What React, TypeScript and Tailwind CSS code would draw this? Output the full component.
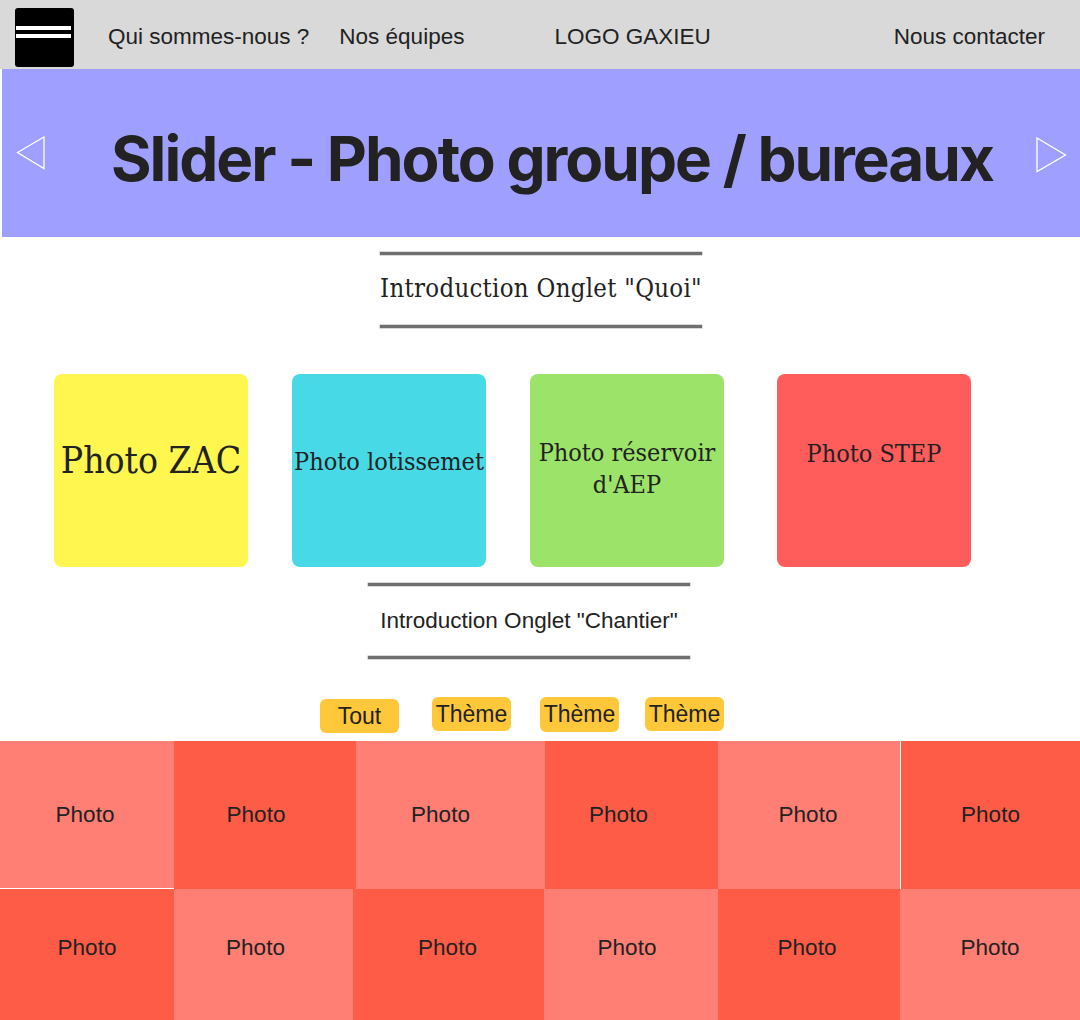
import React from 'react';

const navFont = "font-['Liberation_Sans',Arial,sans-serif]";
const slabFont = "font-['DejaVu_Serif_Condensed','DejaVu_Serif',serif]";

type Cell = { bg: string; w: string; shift: string };

const rowOne: Cell[] = [
  { bg: 'bg-[#ff7f75] border-b border-white', w: 'w-[174px]', shift: 'pr-[4px]' },
  { bg: 'bg-[#ff5c47]', w: 'w-[182px]', shift: 'pr-[18px]' },
  { bg: 'bg-[#ff7f75]', w: 'w-[189px]', shift: 'pr-[20px]' },
  { bg: 'bg-[#ff5c47]', w: 'w-[173px]', shift: 'pr-[26px]' },
  { bg: 'bg-[#ff7f75]', w: 'w-[182px]', shift: 'pr-[2px]' },
  { bg: 'bg-[#ff5c47] border-l border-white', w: 'w-[180px]', shift: 'pr-0' },
];

const rowTwo: Cell[] = [
  { bg: 'bg-[#ff5c47]', w: 'w-[174px]', shift: 'pr-0' },
  { bg: 'bg-[#ff7f75]', w: 'w-[179px]', shift: 'pr-[16px]' },
  { bg: 'bg-[#ff5c47]', w: 'w-[191px]', shift: 'pr-[2px]' },
  { bg: 'bg-[#ff7f75]', w: 'w-[174px]', shift: 'pr-[8px]' },
  { bg: 'bg-[#ff5c47]', w: 'w-[182px]', shift: 'pr-[4px]' },
  { bg: 'bg-[#ff7f75]', w: 'w-[180px]', shift: 'pr-0' },
];

function Rule() {
  return <div className="h-[3px] w-full bg-[#6f6f6f] shadow-[0_0_0_0.5px_#b5b5b5]" />;
}

export default function App() {
  return (
    <div className="h-[1020px] w-[1080px] overflow-hidden bg-white text-[#222]">
      {/* header */}
      <header className={`flex h-[69px] items-center bg-[#d9d9d9] pt-[4px] text-[22.5px] ${navFont}`}>
        <div className="ml-[15px] mt-[2px] flex h-[59px] w-[59px] flex-col justify-start rounded-[3px] bg-black pl-[1px] pt-[18px]">
          <div className="h-[4px] w-[55px] bg-white" />
          <div className="mt-[4px] h-[4px] w-[55px] bg-white" />
        </div>
        <span className="ml-[34px]">Qui sommes-nous ?</span>
        <span className="ml-[30px]">Nos équipes</span>
        <span className="ml-[90px]">LOGO GAXIEU</span>
        <span className="ml-auto mr-[35px]">Nous contacter</span>
      </header>

      {/* slider */}
      <section className="flex h-[168px] items-start border-l-2 border-white bg-[#9f9fff]">
        <svg className="ml-[14px] mt-[67px]" width="29" height="34" viewBox="0 0 29 34" fill="none">
          <polygon points="1.5,16.5 28,1 28,32.5" stroke="white" strokeWidth="1.3" />
        </svg>
        <h1 className="ml-[66px] mt-[59px] font-['Inter',sans-serif] text-[62px] font-bold leading-[62px] tracking-[-2px] text-[#222]">
          Slider - Photo groupe / bureaux
        </h1>
        <svg className="ml-auto mr-[13px] mt-[68px]" width="31" height="36" viewBox="0 0 31 36" fill="none">
          <polygon points="1,1 29.5,18 1,34.5" stroke="white" strokeWidth="1.3" />
        </svg>
      </section>

      {/* intro quoi */}
      <div className="ml-[380px] mt-[15px] w-[322px]">
        <Rule />
        <p className={`flex h-[70px] items-center justify-center whitespace-nowrap pb-[4px] text-[25.5px] tracking-[0.3px] ${slabFont}`}>
          Introduction Onglet "Quoi"
        </p>
        <Rule />
      </div>

      {/* cards */}
      <div className={`mt-[46px] flex whitespace-nowrap text-[#222] ${slabFont}`}>
        <div className="ml-[54px] flex h-[193px] w-[194px] items-center justify-center rounded-[8px] bg-[#fff74f] pb-[20px] text-[37px]">
          Photo ZAC
        </div>
        <div className="ml-[44px] flex h-[193px] w-[194px] items-center justify-center rounded-[8px] bg-[#47dae6] pb-[18px] text-[25px]">
          Photo lotissemet
        </div>
        <div className="ml-[44px] flex h-[193px] w-[194px] items-center justify-center rounded-[8px] bg-[#9ce36a] pb-[4px] text-center text-[25px] leading-[32px]">
          Photo réservoir
          <br />
          d'AEP
        </div>
        <div className="ml-[53px] flex h-[193px] w-[194px] items-start justify-center rounded-[8px] bg-[#ff5c5c] pt-[61px] text-[25px]">
          Photo STEP
        </div>
      </div>

      {/* intro chantier */}
      <div className={`ml-[368px] mt-[16px] w-[322px] ${navFont}`}>
        <Rule />
        <p className="flex h-[70px] items-center justify-center whitespace-nowrap text-[22.5px]">
          Introduction Onglet "Chantier"
        </p>
        <Rule />
      </div>

      {/* filters */}
      <div className={`mt-[38px] flex items-start text-[23px] ${navFont}`}>
        <button className="ml-[320px] mt-[2px] flex h-[34px] w-[79px] items-center justify-center rounded-[6px] bg-[#ffc83b]">
          Tout
        </button>
        <button className="ml-[33px] flex h-[34px] w-[79px] items-center justify-center rounded-[6px] bg-[#ffc83b]">
          Thème
        </button>
        <button className="ml-[29px] flex h-[35px] w-[79px] items-center justify-center rounded-[6px] bg-[#ffc83b]">
          Thème
        </button>
        <button className="ml-[26px] flex h-[34px] w-[79px] items-center justify-center rounded-[6px] bg-[#ffc83b]">
          Thème
        </button>
      </div>

      {/* photo grid */}
      <div className={`mt-[8px] text-[22.5px] ${navFont}`}>
        <div className="flex h-[148px]">
          {rowOne.map((c, i) => (
            <div key={i} className={`flex items-center justify-center ${c.bg} ${c.w} ${c.shift}`}>
              Photo
            </div>
          ))}
        </div>
        <div className="flex h-[131px]">
          {rowTwo.map((c, i) => (
            <div key={i} className={`flex items-center justify-center pb-[14px] ${c.bg} ${c.w} ${c.shift}`}>
              Photo
            </div>
          ))}
        </div>
      </div>
    </div>
  );
}
